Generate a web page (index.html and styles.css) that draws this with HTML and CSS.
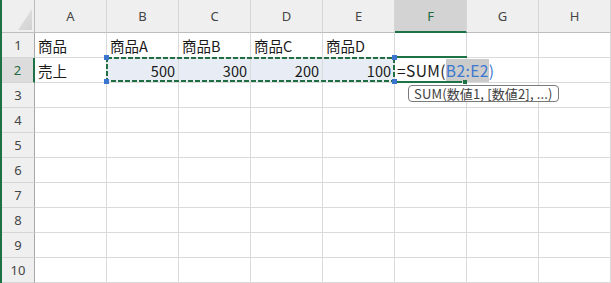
FILE: index.html
```html
<!DOCTYPE html>
<html lang="ja">
<head>
<meta charset="utf-8">
<link rel="stylesheet" href="styles.css">
</head>
<body>
<div class="sheet">
  <div class="grid">
    <div class="hd corner"><span class="tri"></span></div>
    <div class="hd col">A</div>
    <div class="hd col">B</div>
    <div class="hd col">C</div>
    <div class="hd col">D</div>
    <div class="hd col">E</div>
    <div class="hd col active-col">F</div>
    <div class="hd col">G</div>
    <div class="hd col">H</div>

    <div class="hd rowh">1</div>
    <div class="c">商品</div>
    <div class="c">商品A</div>
    <div class="c">商品B</div>
    <div class="c">商品C</div>
    <div class="c">商品D</div>
    <div class="c"></div><div class="c"></div><div class="c"></div>

    <div class="hd rowh active-row">2</div>
    <div class="c">売上</div>
    <div class="c sel num">500</div>
    <div class="c sel num">300</div>
    <div class="c sel num">200</div>
    <div class="c sel num">100</div>
    <div class="c edit"><span class="formula">=SUM(<span class="ref"><span class="hl">B2:E2</span>)</span></span></div>
    <div class="c"></div><div class="c"></div>

    <div class="hd rowh">3</div>
    <div class="c"></div><div class="c"></div><div class="c"></div><div class="c"></div><div class="c"></div><div class="c"></div><div class="c"></div><div class="c"></div>
    <div class="hd rowh">4</div>
    <div class="c"></div><div class="c"></div><div class="c"></div><div class="c"></div><div class="c"></div><div class="c"></div><div class="c"></div><div class="c"></div>
    <div class="hd rowh">5</div>
    <div class="c"></div><div class="c"></div><div class="c"></div><div class="c"></div><div class="c"></div><div class="c"></div><div class="c"></div><div class="c"></div>
    <div class="hd rowh">6</div>
    <div class="c"></div><div class="c"></div><div class="c"></div><div class="c"></div><div class="c"></div><div class="c"></div><div class="c"></div><div class="c"></div>
    <div class="hd rowh">7</div>
    <div class="c"></div><div class="c"></div><div class="c"></div><div class="c"></div><div class="c"></div><div class="c"></div><div class="c"></div><div class="c"></div>
    <div class="hd rowh">8</div>
    <div class="c"></div><div class="c"></div><div class="c"></div><div class="c"></div><div class="c"></div><div class="c"></div><div class="c"></div><div class="c"></div>
    <div class="hd rowh">9</div>
    <div class="c"></div><div class="c"></div><div class="c"></div><div class="c"></div><div class="c"></div><div class="c"></div><div class="c"></div><div class="c"></div>
    <div class="hd rowh">10</div>
    <div class="c"></div><div class="c"></div><div class="c"></div><div class="c"></div><div class="c"></div><div class="c"></div><div class="c"></div><div class="c"></div>
  </div>

  <svg class="ants" width="290" height="25" viewBox="0 0 290 25">
    <rect x="1" y="1" width="287" height="23" fill="none" stroke="#1f6f42" stroke-width="2" stroke-dasharray="5 2"/>
  </svg>
  <span class="handle h-tl"></span>
  <span class="handle h-bl"></span>
  <span class="handle h-tr"></span>
  <span class="handle h-br"></span>

  <span class="active-top"></span>
  <span class="active-bottom"></span>
  <span class="fill-handle"></span>

  <div class="tip">SUM(数値1, [数値2], ...)</div>
</div>
</body>
</html>
```

FILE: styles.css
```css
html, body {
  margin: 0;
  padding: 0;
  background: #ffffff;
  overflow: hidden;
}
.sheet {
  position: relative;
  width: 611px;
  height: 283px;
  border-left: 2px solid #1e7145;
  box-sizing: border-box;
  overflow: hidden;
}
.grid {
  display: grid;
  grid-template-columns: 33px repeat(8, 72px);
  grid-template-rows: 33px repeat(10, 25px);
}
.grid > div {
  box-sizing: border-box;
  border-right: 1px solid #dadada;
  border-bottom: 1px solid #dadada;
}
.hd {
  background: #efefef;
  color: #454545;
  font-family: "Noto Sans", "DejaVu Sans", sans-serif;
  font-size: 13px;
  display: flex;
  align-items: center;
  justify-content: center;
}
.grid > .col {
  border-bottom: 1px solid #bdbdbd;
  border-right: 1px solid #d6d6d6;
}
.grid > .corner {
  border-bottom: 1px solid #bdbdbd;
  border-right: 1px solid #bdbdbd;
  position: relative;
}
.tri {
  position: absolute;
  right: 2px;
  bottom: 2px;
  width: 14px;
  height: 21px;
  background: linear-gradient(135deg, #e4e4e4, #d2d2d2);
  clip-path: polygon(100% 0, 100% 100%, 0 100%);
}
.grid > .rowh {
  border-right: 1px solid #a8a8a8;
  border-bottom: 1px solid #d6d6d6;
}
.grid > .active-col {
  background: #d3d3d3;
  color: #1e6b40;
  border-bottom: 2px solid #1e7145;
}
.grid > .active-row {
  background: #dcdcdc;
  color: #1e6b40;
  border-right: 2px solid #1e7145;
}
.c {
  font-family: "Noto Sans CJK JP", "Noto Sans", sans-serif;
  font-size: 14.5px;
  color: #1a1a1a;
  display: flex;
  align-items: center;
  padding: 0 3px;
  white-space: nowrap;
}
.sel {
  background: #e8edf5;
}
.num {
  justify-content: flex-end;
}
.grid > .edit {
  position: relative;
  overflow: visible;
  padding: 0;
}
.formula {
  position: absolute;
  left: 1px;
  top: 1px;
  height: 23px;
  line-height: 23px;
  padding: 0 4px 0 1px;
  background: #ffffff;
  z-index: 2;
  color: #1a1a1a;
  font-size: 15.5px;
  letter-spacing: 0.4px;
}
.ref {
  color: #3b78d0;
}
.hl {
  background: #cbcbcb;
  display: inline-block;
  height: 23px;
}
.ants {
  position: absolute;
  left: 104px;
  top: 57px;
  z-index: 3;
}
.handle {
  position: absolute;
  width: 5px;
  height: 5px;
  background: #3c75cf;
  z-index: 4;
}
.h-tl { left: 102px; top: 55px; }
.h-bl { left: 102px; top: 79px; }
.h-tr { left: 390px; top: 55px; }
.h-br { left: 390px; top: 79px; }
.active-top, .active-bottom {
  position: absolute;
  left: 394px;
  width: 71px;
  height: 2px;
  background: #1e7145;
  z-index: 3;
}
.active-top { top: 56px; }
.active-bottom { top: 81px; width: 66px; }
.fill-handle {
  position: absolute;
  left: 461px;
  top: 80px;
  width: 4px;
  height: 4px;
  background: #1e7145;
  z-index: 3;
}
.tip {
  position: absolute;
  left: 406px;
  top: 85px;
  height: 17px;
  box-sizing: border-box;
  border: 1px solid #7a7a7a;
  border-radius: 4px;
  background: #ffffff;
  padding: 0 5px;
  font-family: "Noto Sans CJK JP", "Noto Sans", sans-serif;
  font-size: 13px;
  letter-spacing: 0.15px;
  line-height: 15px;
  color: #404040;
  white-space: nowrap;
  z-index: 5;
}
```
